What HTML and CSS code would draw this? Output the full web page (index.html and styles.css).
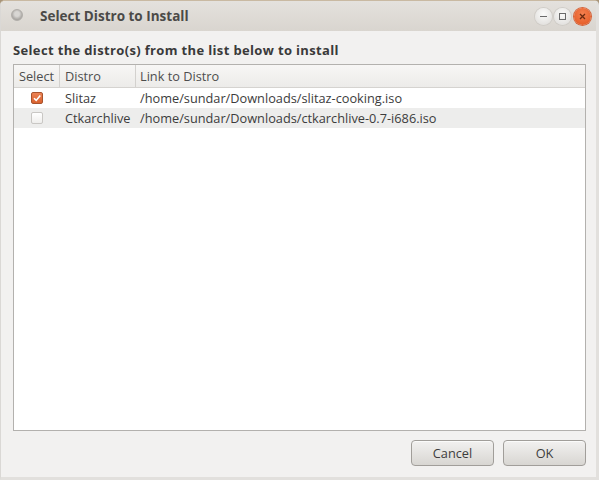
FILE: index.html
```html
<!DOCTYPE html>
<html>
<head>
<meta charset="utf-8">
<link rel="stylesheet" href="styles.css">
</head>
<body>
<div class="window">
  <div class="titlebar">
    <span class="app-icon"></span>
    <span class="title">Select Distro to Install</span>
    <div class="controls">
      <span class="ctl ctl-min"><svg width="17" height="17" viewBox="0 0 17 17"><path d="M5 8.5h7" stroke="#6a6a6a" stroke-width="1.2"/></svg></span>
      <span class="ctl ctl-max"><svg width="17" height="17" viewBox="0 0 17 17"><rect x="5.5" y="5.5" width="6" height="6" fill="none" stroke="#6a6a6a" stroke-width="1"/></svg></span>
      <span class="ctl ctl-close"><svg width="17" height="17" viewBox="0 0 17 17"><path d="M6 6l5 5M11 6l-5 5" stroke="#6b2a10" stroke-width="1.3"/></svg></span>
    </div>
  </div>
  <div class="content">
    <div class="label">Select the distro(s) from the list below to install</div>
    <div class="table">
      <div class="row header">
        <div class="cell c-sel">Select</div>
        <div class="cell c-distro">Distro</div>
        <div class="cell c-link">Link to Distro</div>
      </div>
      <div class="row">
        <div class="cell c-sel"><span class="check checked"><svg width="10" height="10" viewBox="0 0 10 10"><path d="M2 5.2l2.2 2.2L8.3 2.5" fill="none" stroke="#fff" stroke-width="1.6"/></svg></span></div>
        <div class="cell c-distro">Slitaz</div>
        <div class="cell c-link">/home/sundar/Downloads/slitaz-cooking.iso</div>
      </div>
      <div class="row alt">
        <div class="cell c-sel"><span class="check"></span></div>
        <div class="cell c-distro">Ctkarchlive</div>
        <div class="cell c-link">/home/sundar/Downloads/ctkarchlive-0.7-i686.iso</div>
      </div>
    </div>
    <div class="buttons">
      <button class="btn">Cancel</button>
      <button class="btn">OK</button>
    </div>
  </div>
</div>
</body>
</html>
```
FILE: styles.css
```css
html, body {
  margin: 0;
  padding: 0;
  background: #a89478;
}
body {
  font-family: "Open Sans", "DejaVu Sans", sans-serif;
  font-size: 12.75px;
  color: #3c3c3c;
}
.window {
  width: 599px;
  height: 480px;
  box-sizing: border-box;
  display: flex;
  flex-direction: column;
  background: #f2f1f0;
  border-radius: 5px 5px 0 0;
  border-top: 1px solid #c9b9a2;
  border-left: 1px solid #dad8d5;
  border-right: 3px solid #e2e0dd;
  border-bottom: 3px solid #e2e0dd;
  overflow: hidden;
}
.titlebar {
  height: 30px;
  flex: none;
  display: flex;
  align-items: center;
  background: linear-gradient(#e4e1dd, #d9d5cf);
  padding-left: 10px;
}
.app-icon {
  width: 10px;
  height: 10px;
  border-radius: 50%;
  background: radial-gradient(circle at 50% 40%, #d8d6d3 0 30%, #a9a6a2 70%);
  border: 1px solid #b0ada9;
  margin-right: 17px;
  margin-top: -2px;
}
.title {
  font-weight: bold;
  font-size: 13.5px;
  color: #4b4a48;
  margin-top: -1px;
}
.controls {
  margin-left: auto;
  display: flex;
  gap: 1px;
  margin-right: 5px;
  margin-top: 1px;
}
.ctl {
  width: 17px;
  height: 17px;
  border-radius: 50%;
  display: block;
}
.ctl svg { display: block; }
.ctl-min, .ctl-max {
  background: radial-gradient(circle at 50% 35%, #fbfbfa, #dcdad7);
  box-shadow: 0 0 0 1px #cfccc7;
}
.ctl-max { margin-left: 1px; }
.ctl-close {
  background: radial-gradient(circle at 50% 35%, #f4804f, #e2551f);
  box-shadow: 0 0 0 1px #d4633a;
  margin-left: 2px;
}
.content {
  flex: 1;
  display: flex;
  flex-direction: column;
  padding: 9px 10px 11px 12px;
  min-height: 0;
}
.label {
  font-weight: bold;
  font-size: 13px;
  letter-spacing: 0.35px;
  color: #3a3a3a;
  height: 20px;
  line-height: 20px;
  margin-bottom: 4px;
}
.table {
  flex: 1;
  background: #fff;
  border: 1px solid #b3b1ae;
  display: flex;
  flex-direction: column;
}
.row {
  display: grid;
  grid-template-columns: 46px 76px 1fr;
  height: 20px;
  line-height: 20px;
}
.row.alt { background: #ededec; }
.row.header {
  height: 22px;
  line-height: 22px;
  background: linear-gradient(#f7f6f5, #ecebe9);
  border-bottom: 1px solid #d5d3d0;
  color: #4d4d4d;
}
.header .cell { border-right: 1px solid #d3d1ce; }
.header .c-link { border-right: none; }
.cell {
  padding-left: 4px;
  white-space: nowrap;
  overflow: hidden;
}
.c-distro { padding-left: 5px; }
.c-sel { text-align: center; padding-left: 0; }
.row:not(.header) .c-sel {
  display: flex;
  align-items: center;
  justify-content: center;
}
.check {
  width: 10px;
  height: 10px;
  border: 1px solid #c9c7c4;
  border-radius: 2px;
  background: linear-gradient(#ffffff, #efeeec);
  display: block;
}
.check.checked {
  background: linear-gradient(#ec8253, #d9622f);
  border-color: #a8532d;
}
.check svg { display: block; }
.buttons {
  flex: none;
  display: flex;
  justify-content: flex-end;
  gap: 9px;
  margin-top: 9px;
}
.btn {
  width: 83px;
  height: 26px;
  border: 1px solid #a19e9a;
  border-radius: 4px;
  background: linear-gradient(#f2f1f0, #d8d6d2);
  font-family: "Open Sans", "DejaVu Sans", sans-serif;
  font-size: 12.75px;
  color: #3c3c3c;
  padding: 0;
  box-shadow: inset 0 1px 0 #fbfbfa;
}
```
